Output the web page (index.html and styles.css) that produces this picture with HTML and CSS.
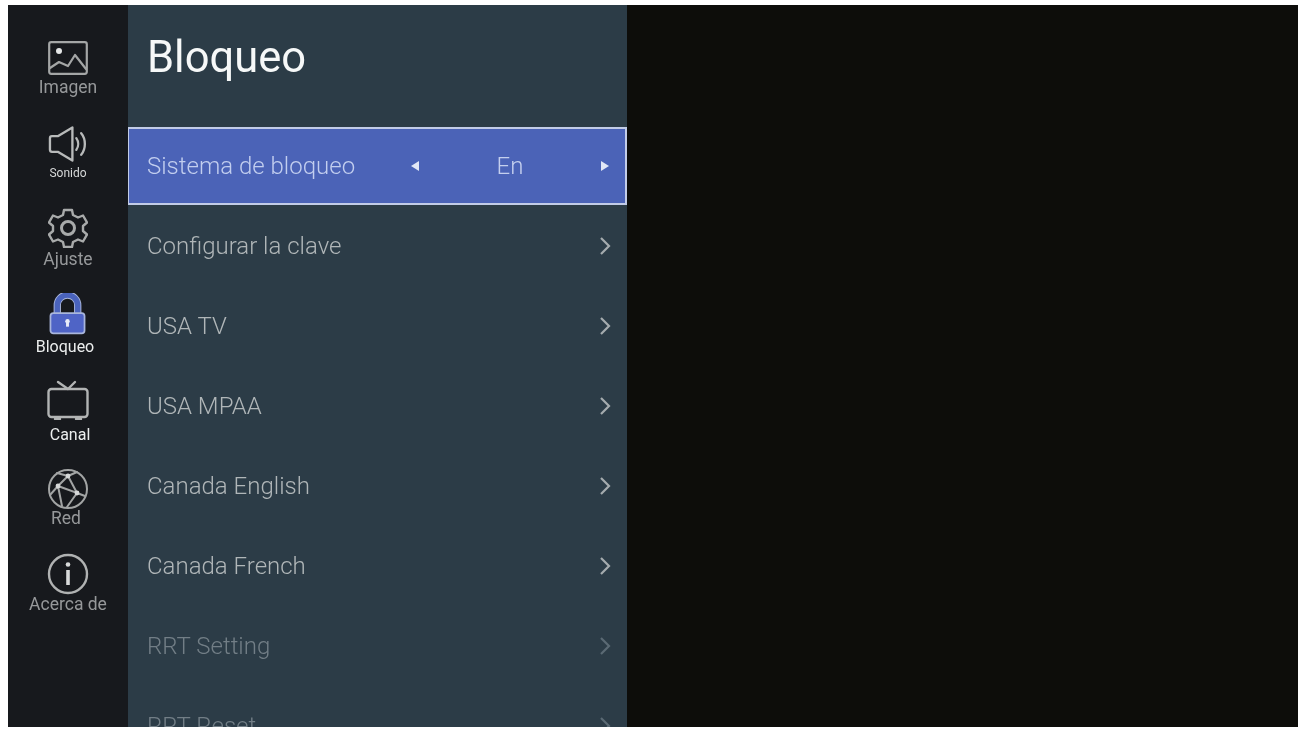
FILE: index.html
```html
<!DOCTYPE html>
<html lang="es">
<head>
<meta charset="utf-8">
<title>Bloqueo</title>
<link rel="stylesheet" href="styles.css">
</head>
<body>
<div class="screen">
  <nav class="sidebar">
    <div class="nav-item item-imagen">
      <svg class="icon" viewBox="0 0 40 34" fill="none" stroke="#a4a6a6" stroke-width="2.200" stroke-linejoin="round" stroke-linecap="round"><rect x="1.200" y="1.200" width="37.600" height="31.600" rx="2"/><path d="M2 27l9-6 9 4 7-11 11 14"/><circle cx="11" cy="10" r="3" fill="#e4e6e6" stroke="none"/></svg>
      <span class="label dim">Imagen</span>
    </div>
    <div class="nav-item item-sonido">
      <svg class="icon" viewBox="0 0 42 38" fill="none" stroke="#b8baba" stroke-width="2.400" stroke-linejoin="round" stroke-linecap="round"><path d="M4 11h6L25 2v34L10 27H4q-2 0-2-2V13q0-2 2-2z"/><path d="M29 13c2.500 3.500 2.500 8.500 0 12"/><path d="M34 8c5 6 5 16 0 22"/></svg>
      <span class="label small">Sonido</span>
    </div>
    <div class="nav-item item-ajuste">
      <svg class="icon" viewBox="0 0 40 40" fill="none" stroke="#a8aaaa" stroke-width="2.400" stroke-linejoin="round"><path d="M16 2h8l1 5 5 2.500 5-2 4 7-4 3.500v5l4 3.500-4 7-5-2-5 2.500-1 5h-8l-1-5-5-2.500-5 2-4-7 4-3.500v-5L1 14.500l4-7 5 2 5-2.500z"/><circle cx="20" cy="20" r="6.500" stroke-width="3"/></svg>
      <span class="label dim">Ajuste</span>
    </div>
    <div class="nav-item item-bloqueo">
      <svg class="icon" viewBox="0 0 38 42"><path d="M8.500 22v-10a10.500 10.500 0 0 1 21 0v10" fill="none" stroke="#a9b6dc" stroke-width="7.500"/><path d="M8.500 22v-10a10.500 10.500 0 0 1 21 0v10" fill="none" stroke="#4a63bd" stroke-width="5.500"/><rect x="1.500" y="20" width="35" height="21" rx="3" fill="#4f64c6" stroke="#a9b6dc" stroke-width="1.800"/><rect x="17.500" y="28" width="3" height="6" fill="#e8ecf8"/><circle cx="19" cy="28.500" r="2.300" fill="#e8ecf8"/></svg>
      <span class="label bright">Bloqueo</span>
    </div>
    <div class="nav-item item-canal">
      <svg class="icon" viewBox="0 0 42 40" fill="none" stroke="#b2b4b4" stroke-width="2.400" stroke-linejoin="round" stroke-linecap="round"><rect x="1.500" y="9" width="39" height="28" rx="3"/><path d="M11 2l10 7 7-7"/><path d="M8 39h5M29 39h5"/></svg>
      <span class="label bright">Canal</span>
    </div>
    <div class="nav-item item-red">
      <svg class="icon" viewBox="0 0 42 42" fill="none" stroke="#a2a4a4" stroke-width="2" stroke-linecap="round"><circle cx="21" cy="21" r="19"/><path d="M11 18L21 8l9 17-19-7zM11 18L3 27M21 8L30 4M30 25l8 3M30 25L20 39M11 18l4 20M21 8L10 5"/><circle cx="11" cy="18" r="2.400" fill="#d5d7d7" stroke="none"/><circle cx="21" cy="8" r="2.400" fill="#d5d7d7" stroke="none"/><circle cx="30" cy="25" r="2.400" fill="#d5d7d7" stroke="none"/></svg>
      <span class="label dim">Red</span>
    </div>
    <div class="nav-item item-acerca">
      <svg class="icon" viewBox="0 0 42 42" fill="none" stroke="#b0b2b2" stroke-width="2.400"><circle cx="21" cy="21" r="19"/><circle cx="21" cy="11.500" r="2.300" fill="#d8dada" stroke="none"/><path d="M21 17v15" stroke="#d8dada" stroke-width="3.600"/></svg>
      <span class="label dim">Acerca de</span>
    </div>
  </nav>

  <section class="panel">
    <h1 class="title">Bloqueo</h1>
    <ul class="menu">
      <li class="row selected">
        <span class="row-label">Sistema de bloqueo</span>
        <span class="tri tri-left"></span>
        <span class="value">En</span>
        <span class="tri tri-right"></span>
      </li>
      <li class="row"><span class="row-label">Configurar la clave</span><svg class="chev" viewBox="0 0 12 20"><path d="M2 2l8 8-8 8"/></svg></li>
      <li class="row"><span class="row-label">USA TV</span><svg class="chev" viewBox="0 0 12 20"><path d="M2 2l8 8-8 8"/></svg></li>
      <li class="row"><span class="row-label">USA MPAA</span><svg class="chev" viewBox="0 0 12 20"><path d="M2 2l8 8-8 8"/></svg></li>
      <li class="row"><span class="row-label">Canada English</span><svg class="chev" viewBox="0 0 12 20"><path d="M2 2l8 8-8 8"/></svg></li>
      <li class="row"><span class="row-label">Canada French</span><svg class="chev" viewBox="0 0 12 20"><path d="M2 2l8 8-8 8"/></svg></li>
      <li class="row disabled"><span class="row-label">RRT Setting</span><svg class="chev" viewBox="0 0 12 20"><path d="M2 2l8 8-8 8"/></svg></li>
      <li class="row disabled"><span class="row-label">RRT Reset</span><svg class="chev" viewBox="0 0 12 20"><path d="M2 2l8 8-8 8"/></svg></li>
    </ul>
  </section>

  <div class="preview"></div>
</div>
</body>
</html>
```
FILE: styles.css
```css
* { box-sizing: border-box; }
html, body { height: 100%; }
body {
  margin: 0;
  padding: 5px 3px 4px 8px;
  background: #fff;
  overflow: hidden;
  font-family: Roboto, "Liberation Sans", sans-serif;
}
.screen {
  display: flex;
  height: 100%;
  background: #0d0d0a;
}
.sidebar {
  width: 120px;
  flex: none;
  background: #17191d;
  display: flex;
  flex-direction: column;
  align-items: center;
}
.nav-item {
  display: flex;
  flex-direction: column;
  align-items: center;
  filter: blur(0.5px);
}
.icon { display: block; }
.label { font-size: 17.500px; line-height: 18px; white-space: nowrap; }
.label.dim { color: #96989a; }
.label.bright { color: #eceeee; font-size: 16px; }
.label.small { color: #d6d8d8; font-size: 12px; }

.item-imagen { margin-top: 36px; }
.item-imagen .icon { width: 40px; height: 34px; }
.item-imagen .label { margin-top: 3px; }
.item-sonido { margin-top: 29px; }
.item-sonido .icon { width: 41px; height: 38px; }
.item-sonido .label { margin-top: 1px; }
.item-ajuste { margin-top: 26px; }
.item-ajuste .icon { width: 40px; height: 40px; }
.item-ajuste .label { margin-top: 2px; }
.item-bloqueo { margin-top: 25px; }
.item-bloqueo .icon { width: 37px; height: 42px; }
.item-bloqueo .label { margin-top: 3px; margin-right: 6px; }
.item-canal { margin-top: 24px; }
.item-canal .icon { width: 42px; height: 40px; }
.item-canal .label { margin-top: 6px; margin-left: 4px; }
.item-red { margin-top: 24px; }
.item-red .icon { width: 42px; height: 42px; }
.item-red .label { margin-top: -1px; margin-right: 4px; }
.item-acerca { margin-top: 26px; }
.item-acerca .icon { width: 42px; height: 42px; }
.item-acerca .label { margin-top: 0; }

.panel {
  width: 499px;
  flex: none;
  background: #2c3c47;
  overflow: hidden;
  height: 100%;
}
.title {
  margin: 0;
  height: 122px;
  padding: 29px 0 0 19px;
  font-size: 43.500px;
  line-height: 48px;
  font-weight: 400;
  color: #f6f8f8;
  filter: blur(0.4px);
}
.menu { list-style: none; margin: 0; padding: 0; }
.row {
  height: 80px;
  display: flex;
  align-items: center;
  padding: 0 16px 0 19px;
  color: #b0b6b8;
  font-size: 24px;
  font-weight: 300;
}
.row-label { flex: 1; white-space: nowrap; filter: blur(0.5px); }
.chev {
  width: 12px;
  height: 20px;
  fill: none;
  stroke: #a5abae;
  stroke-width: 2.200;
  filter: blur(0.4px);
}
.row.disabled { color: #727e86; }
.row.disabled .chev { stroke: #5b6a74; }
.row.selected {
  height: 78px;
  margin-bottom: 1px;
  background: #4b63b7;
  border: 2px solid #c2cce8;
  border-left-width: 1px;
  color: #c2ceef;
  padding: 0 16px 0 18px;
}
.row.selected .row-label { flex: none; width: 264px; }
.value { width: 182px; text-align: center; color: #c4cfee; font-size: 24px; filter: blur(0.5px); }
.tri { width: 0; height: 0; border-top: 5px solid transparent; border-bottom: 5px solid transparent; flex: none; }
.tri-left { border-right: 8px solid #e2e7f6; }
.tri-right { border-left: 8px solid #e2e7f6; }
.preview { flex: 1; }
```
